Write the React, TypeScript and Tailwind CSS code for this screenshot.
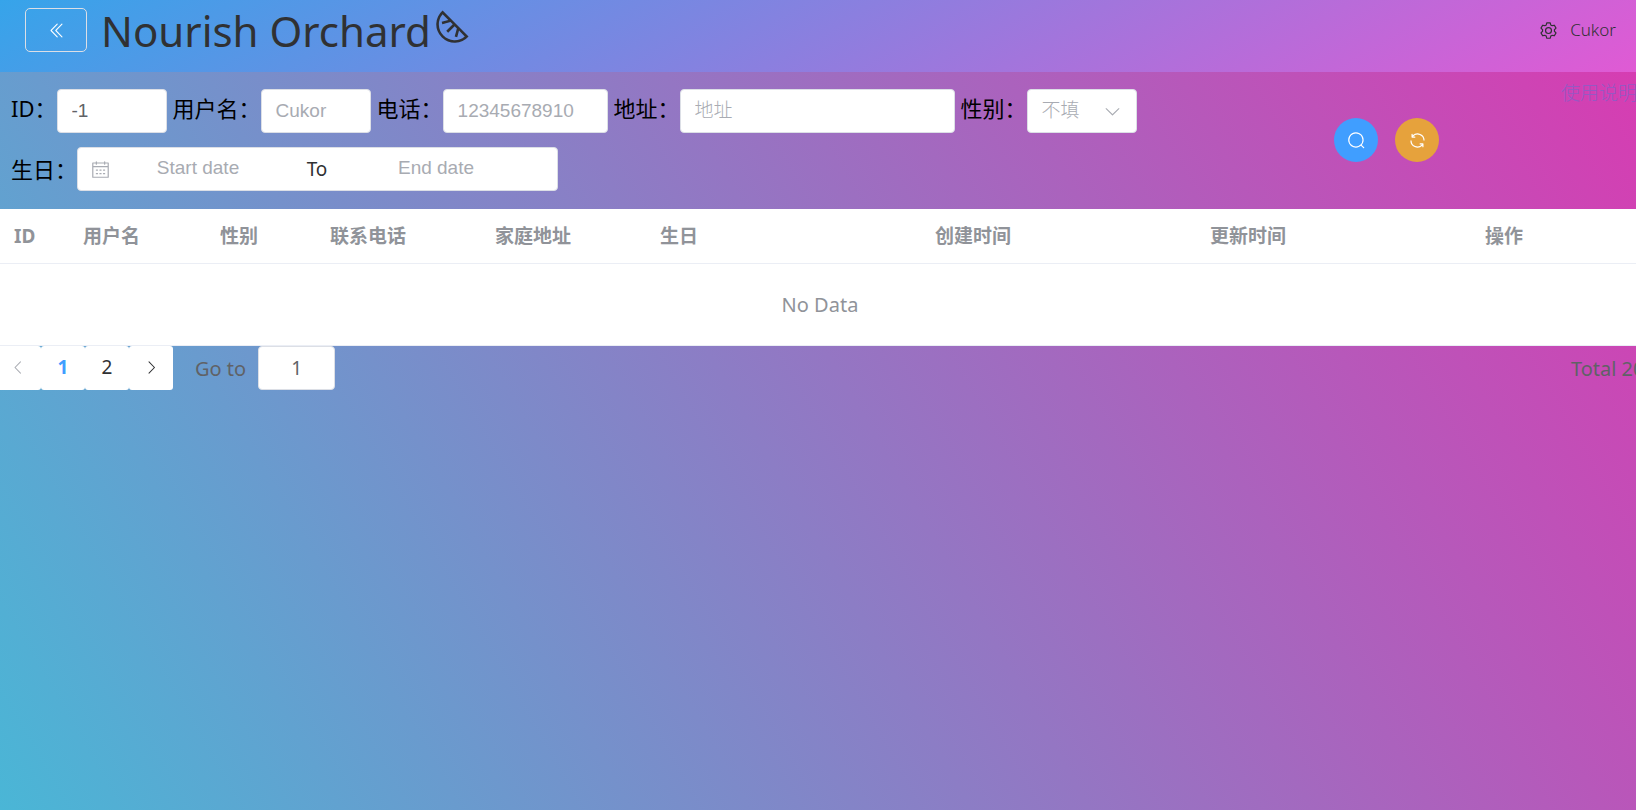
import { useState } from "react";
import type { ReactNode } from "react";

const inputClass =
  "h-11 rounded border border-[#dcdfe6] bg-white px-3.5 font-['Liberation_Sans','Noto_Sans_CJK_SC',sans-serif] text-[19px] font-light text-[#606266] outline-none placeholder:text-[#a8abb2]";

const dateInputClass =
  "h-10 w-[176px] self-start bg-transparent text-center font-['Liberation_Sans','Noto_Sans_CJK_SC',sans-serif] text-[19px] text-[#606266] outline-none placeholder:text-[#a8abb2]";

const pagerClass = "flex h-11 items-center justify-center bg-white text-[19px]";

const columns = [
  { title: "ID", width: "w-[69px]" },
  { title: "用户名", width: "w-[137px]" },
  { title: "性别", width: "w-[110px]" },
  { title: "联系电话", width: "w-[165px]" },
  { title: "家庭地址", width: "w-[165px]" },
  { title: "生日", width: "w-[275px]" },
  { title: "创建时间", width: "w-[275px]" },
  { title: "更新时间", width: "w-[275px]" },
  { title: "操作", width: "w-auto" },
];

const icons = {
  doubleLeft:
    "M529.4 149.4a29.1 29.1 0 0 1 41.7 0 30.6 30.6 0 0 1 0 42.7L259.3 512l311.8 319.9a30.6 30.6 0 0 1-.5 43.2 29.1 29.1 0 0 1-41.2-.5L197.8 534.3a32 32 0 0 1 0-44.7l331.6-340.2zm256 0a29.1 29.1 0 0 1 41.7 0 30.6 30.6 0 0 1 0 42.7L515.3 512l311.8 319.9a30.6 30.6 0 0 1-.5 43.2 29.1 29.1 0 0 1-41.2-.5L453.8 534.3a32 32 0 0 1 0-44.7l331.6-340.2z",
  left: "M609.4 149.4 277.8 489.6a32 32 0 0 0 0 44.7l331.6 340.3a29.1 29.1 0 0 0 41.7 0 30.6 30.6 0 0 0 0-42.8L339.3 512l311.9-320a30.6 30.6 0 0 0 0-42.6 29.1 29.1 0 0 0-41.8 0z",
  right:
    "M340.9 149.3a30.6 30.6 0 0 0 0 42.8L652.7 512 340.9 831.9a30.6 30.6 0 0 0 0 42.7 29.1 29.1 0 0 0 41.7 0L714.2 534.3a32 32 0 0 0 0-44.7L382.6 149.4a29.1 29.1 0 0 0-41.7 0z",
  down: "M831.9 340.9 512 652.7 192.1 340.9a30.6 30.6 0 0 0-42.7 0 29.1 29.1 0 0 0 0 41.6l340.3 331.7a32 32 0 0 0 44.6 0l340.3-331.7a29.1 29.1 0 0 0 0-41.7 30.6 30.6 0 0 0-42.7 0z",
  melon:
    "m683.072 600.32-43.648 162.816-61.824-16.512 53.248-198.528L576 493.248l-158.4 158.4-45.248-45.248 158.4-158.4-55.616-55.616-198.528 53.248-16.512-61.824 162.816-43.648L282.752 200A384 384 0 0 0 824 741.248L683.072 600.32zm231.552 141.056a448 448 0 1 1-632-632l632 632z",
  setting:
    "M600.704 64a32 32 0 0 1 30.464 22.208l35.2 109.376c14.784 7.232 28.928 15.36 42.432 24.512l112.384-24.192a32 32 0 0 1 34.432 15.36L944.32 364.8a32 32 0 0 1-4.032 37.504l-77.12 85.12a357.12 357.12 0 0 1 0 49.024l77.12 85.248a32 32 0 0 1 4.032 37.504l-88.704 153.6a32 32 0 0 1-34.432 15.296L708.8 803.904c-13.44 9.088-27.648 17.28-42.368 24.512l-35.264 109.376A32 32 0 0 1 600.704 960H423.296a32 32 0 0 1-30.464-22.208L357.696 828.48a351.616 351.616 0 0 1-42.56-24.64l-112.32 24.256a32 32 0 0 1-34.432-15.36L79.68 659.2a32 32 0 0 1 4.032-37.504l77.12-85.248a357.12 357.12 0 0 1 0-48.896l-77.12-85.248A32 32 0 0 1 79.68 364.8l88.704-153.6a32 32 0 0 1 34.432-15.296l112.32 24.256c13.568-9.152 27.776-17.408 42.56-24.64l35.2-109.312A32 32 0 0 1 423.232 64H600.64zm-23.424 64H446.72l-36.352 113.088-24.512 11.968a294.113 294.113 0 0 0-34.816 20.096l-22.656 15.36-116.224-25.088-65.28 113.152 79.68 88.192-1.92 27.136a293.12 293.12 0 0 0 0 40.192l1.92 27.136-79.808 88.192 65.344 113.152 116.224-25.024 22.656 15.296a294.113 294.113 0 0 0 34.816 20.096l24.512 11.968L446.72 896h130.688l36.48-113.152 24.448-11.904a288.282 288.282 0 0 0 34.752-20.096l22.592-15.296 116.288 25.024 65.28-113.152-79.744-88.192 1.92-27.136a293.12 293.12 0 0 0 0-40.256l-1.92-27.136 79.808-88.128-65.344-113.152-116.288 24.96-22.592-15.232a287.616 287.616 0 0 0-34.752-20.096l-24.448-11.904L577.344 128zM512 320a192 192 0 1 1 0 384 192 192 0 0 1 0-384zm0 64a128 128 0 1 0 0 256 128 128 0 0 0 0-256z",
  search:
    "m795.904 750.72 124.992 124.928a32 32 0 0 1-45.248 45.248L750.656 795.904a416 416 0 1 1 45.248-45.248zM480 832a352 352 0 1 0 0-704 352 352 0 0 0 0 704z",
  refresh:
    "M771.776 794.88A384 384 0 0 1 128 512h64a320 320 0 0 0 555.712 216.448H654.72a32 32 0 1 1 0-64h149.056a32 32 0 0 1 32 32v148.928a32 32 0 1 1-64 0v-50.56zM276.288 295.616h92.992a32 32 0 0 1 0 64H220.16a32 32 0 0 1-32-32V178.56a32 32 0 0 1 64 0v50.56A384 384 0 0 1 896.128 512h-64a320 320 0 0 0-555.776-216.384z",
  calendar:
    "M128 384v512h768V192H768v32a32 32 0 1 1-64 0v-32H320v32a32 32 0 0 1-64 0v-32H128v128h768v64H128zm192-256h384V96a32 32 0 1 1 64 0v32h160a32 32 0 0 1 32 32v768a32 32 0 0 1-32 32H96a32 32 0 0 1-32-32V160a32 32 0 0 1 32-32h160V96a32 32 0 0 1 64 0v32zm-32 384h64a32 32 0 0 1 0 64h-64a32 32 0 0 1 0-64zm0 192h64a32 32 0 1 1 0 64h-64a32 32 0 1 1 0-64zm192-192h64a32 32 0 0 1 0 64h-64a32 32 0 0 1 0-64zm0 192h64a32 32 0 1 1 0 64h-64a32 32 0 1 1 0-64zm192-192h64a32 32 0 1 1 0 64h-64a32 32 0 1 1 0-64zm0 192h64a32 32 0 1 1 0 64h-64a32 32 0 1 1 0-64z",
};

function Icon({ name, className }: { name: keyof typeof icons; className: string }) {
  return (
    <svg viewBox="0 0 1024 1024" className={className} fill="currentColor" aria-hidden="true">
      <path d={icons[name]} />
    </svg>
  );
}

function Field({ id, label, children }: { id: string; label: string; children: ReactNode }) {
  return (
    <div className="flex items-start">
      <label htmlFor={id} className="text-[22px] leading-[38px] whitespace-nowrap text-black">
        {label}
      </label>
      {children}
    </div>
  );
}

export default function App() {
  const [page, setPage] = useState(1);

  return (
    <div className="flex min-h-screen flex-col overflow-x-hidden font-['Noto_Sans','Noto_Sans_CJK_SC',sans-serif]">
      <header className="flex h-[72px] items-start justify-between bg-[linear-gradient(150deg,#36a4ea,#e05ad4)] pr-5 pl-[25px]">
        <div className="flex items-start">
          <button
            type="button"
            aria-label="Back"
            className="mt-2 flex h-11 w-[62px] items-center justify-center rounded-[5px] border border-[#dcdfe6] text-white"
          >
            <Icon name="doubleLeft" className="size-[19px]" />
          </button>
          <h1 className="ml-3.5 flex items-start text-[42px] leading-[62px] whitespace-nowrap text-[#303133]">
            Nourish Orchard
            <Icon name="melon" className="mt-1.5 size-[42px]" />
          </h1>
        </div>
        <div className="flex h-[60px] items-center gap-3 text-[17px] font-light text-[#303133]">
          <Icon name="setting" className="size-[19px]" />
          <span>Cukor</span>
        </div>
      </header>

      <main className="flex-1 bg-[linear-gradient(60deg,#4ab6d6,#d63db2)]">
        <section className="grid h-[137px] grid-cols-[1334fr_227fr_75px]">
          <form
            className="flex flex-wrap content-start gap-x-1.5 gap-y-3.5 pt-[17px] pl-[11px]"
            onSubmit={(e) => e.preventDefault()}
          >
            <Field id="uid" label="ID：">
              <input id="uid" defaultValue="-1" className={`${inputClass} w-[110px]`} />
            </Field>
            <Field id="name" label="用户名：">
              <input id="name" placeholder="Cukor" className={`${inputClass} w-[110px]`} />
            </Field>
            <Field id="phone" label="电话：">
              <input id="phone" placeholder="12345678910" className={`${inputClass} w-[165px]`} />
            </Field>
            <Field id="address" label="地址：">
              <input id="address" placeholder="地址" className={`${inputClass} w-[275px]`} />
            </Field>
            <Field id="gender" label="性别：">
              <div className="relative text-[#a8abb2]">
                <select
                  id="gender"
                  defaultValue=""
                  className="h-11 w-[110px] appearance-none rounded border border-[#dcdfe6] bg-white px-3.5 font-['Liberation_Sans','Noto_Sans_CJK_SC',sans-serif] text-[19px] font-light text-[#a8abb2] outline-none"
                >
                  <option value="">不填</option>
                  <option value="m">男</option>
                  <option value="f">女</option>
                </select>
                <Icon name="down" className="pointer-events-none absolute top-[13px] right-[15px] size-[19px]" />
              </div>
            </Field>
            <div className="flex items-center">
              <label htmlFor="birth-start" className="text-[22px] leading-11 whitespace-nowrap text-black">
                生日：
              </label>
              <div className="flex h-11 w-[481px] items-center rounded border border-[#dcdfe6] bg-white px-[13px]">
                <Icon name="calendar" className="size-[19px] text-[#a8abb2]" />
                <input id="birth-start" placeholder="Start date" className={dateInputClass} />
                <span className="flex-1 text-center text-[19px] text-[#303133]">To</span>
                <input id="birth-end" aria-label="End date" placeholder="End date" className={dateInputClass} />
                <span className="w-5" />
              </div>
            </div>
          </form>
          <div className="flex items-start gap-[17px] pt-[46px] text-white">
            <button type="button" aria-label="Search" className="flex size-11 items-center justify-center rounded-full bg-[#409eff]">
              <Icon name="search" className="size-[19px]" />
            </button>
            <button type="button" aria-label="Refresh" className="flex size-11 items-center justify-center rounded-full bg-[#e6a23c]">
              <Icon name="refresh" className="size-[19px]" />
            </button>
          </div>
          <a href="#help" className="pt-[9px] text-[19px] leading-6 font-light whitespace-nowrap text-[#9658c4]">
            使用说明
          </a>
        </section>

        <table className="w-full table-fixed bg-white text-[19px] text-[#909399]">
          <thead>
            <tr className="h-[54px] border-b border-[#ebeef5]">
              {columns.map((c) => (
                <th key={c.title} className={`${c.width} pl-3.5 text-left font-bold`}>
                  {c.title}
                </th>
              ))}
            </tr>
          </thead>
          <tbody>
            <tr className="h-[82px] border-b border-[#ebeef5]">
              <td colSpan={9} className="pt-0.5 pl-1 text-center text-[20px]">
                No Data
              </td>
            </tr>
          </tbody>
        </table>

        <nav aria-label="Pagination" className="flex items-center text-[20px] text-[#606266]">
          <button
            type="button"
            aria-label="Previous page"
            disabled={page === 1}
            onClick={() => setPage(1)}
            className={`${pagerClass} w-[41px] rounded-r-[3px] pr-1 text-[#303133] disabled:text-[#a8abb2]`}
          >
            <Icon name="left" className="size-[17px]" />
          </button>
          {[1, 2].map((n) => (
            <button
              key={n}
              type="button"
              onClick={() => setPage(n)}
              className={`${pagerClass} w-11 rounded-[3px] ${page === n ? "font-bold text-[#409eff]" : "text-[#303133]"}`}
            >
              {n}
            </button>
          ))}
          <button
            type="button"
            aria-label="Next page"
            onClick={() => setPage(2)}
            className={`${pagerClass} w-11 rounded-[3px] text-[#303133]`}
          >
            <Icon name="right" className="size-[17px]" />
          </button>
          <label htmlFor="goto" className="ml-[22px] pt-[3px] whitespace-nowrap">
            Go to
          </label>
          <input
            id="goto"
            defaultValue="1"
            className="ml-3 h-11 w-[77px] rounded border border-[#dcdfe6] bg-white text-center text-[19px] text-[#606266] outline-none"
          />
          <span className="ml-auto w-[65px] pt-[3px] whitespace-nowrap">Total 20</span>
        </nav>
      </main>
    </div>
  );
}
